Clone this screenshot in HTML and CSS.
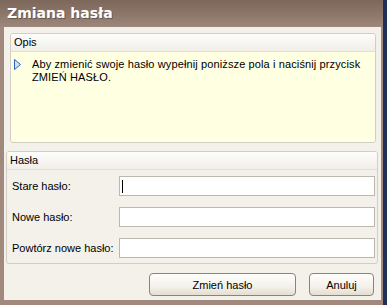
FILE: index.html
```html
<!DOCTYPE html>
<html lang="pl">
<head>
<meta charset="utf-8">
<title>Zmiana hasła</title>
<link rel="stylesheet" href="styles.css">
</head>
<body>
<div class="window">
  <div class="titlebar">Zmiana hasła</div>
  <div class="client">
    <div class="box opis">
      <div class="box-head">Opis</div>
      <div class="opis-body">
        <svg class="arrow" width="7" height="11" viewBox="0 0 7 11"><path d="M0.5 0.5 L6.5 5.5 L0.5 10.5 Z" fill="#cfe0f7" stroke="#2f63c2" stroke-width="1"/></svg>
        <p class="opis-text">Aby zmienić swoje hasło wypełnij poniższe pola i naciśnij przycisk ZMIEŃ HASŁO.</p>
      </div>
    </div>
    <div class="box hasla">
      <div class="box-head">Hasła</div>
      <div class="form">
        <div class="row"><span class="label">Stare hasło:</span><div class="field"><span class="caret"></span></div></div>
        <div class="row"><span class="label">Nowe hasło:</span><div class="field"></div></div>
        <div class="row"><span class="label">Powtórz nowe hasło:</span><div class="field"></div></div>
      </div>
    </div>
    <div class="buttons">
      <button class="btn btn-main">Zmień hasło</button>
      <button class="btn btn-cancel">Anuluj</button>
    </div>
  </div>
</div>
</body>
</html>
```
FILE: styles.css
```css
html, body {
  margin: 0;
  padding: 0;
  background: #1f2f55;
}
.window {
  width: 383px;
  height: 305px;
  display: flex;
  flex-direction: column;
  background: #a18a7d;
  font-family: "Liberation Sans", Arial, sans-serif;
  font-size: 11px;
  color: #000;
}
.titlebar {
  height: 27px;
  box-sizing: border-box;
  padding: 4px 0 0 7px;
  background: linear-gradient(#7d675b, #8f796d 60%, #9e887b);
  color: #fff;
  font-family: "DejaVu Sans", sans-serif;
  font-weight: bold;
  font-size: 14px;
  line-height: 18px;
  text-shadow: 1px 1px 0 #6a564b;
}
.client {
  flex: 1;
  margin: 0 2px 5px 4px;
  background: #f3f1ea;
  display: flex;
  flex-direction: column;
}
.box {
  border: 1px solid #d3cec4;
  border-radius: 3px;
  overflow: hidden;
}
.box-head {
  height: 17px;
  line-height: 17px;
  border-bottom: 1px solid #e3dfd6;
  background: linear-gradient(#fdfdfb, #f1eee7);
  padding-left: 3px;
}
.opis {
  margin: 6px 5px 0 6px;
  height: 108px;
  display: flex;
  flex-direction: column;
}
.opis-body {
  flex: 1;
  background: #ffffe1;
  display: flex;
  align-items: flex-start;
  padding: 6px 0 0 3px;
}
.arrow {
  display: block;
  margin-top: 1px;
  flex: none;
}
.opis-text {
  margin: 0 0 0 11px;
  line-height: 13px;
  letter-spacing: 0.12px;
  width: 335px;
}
.hasla {
  margin: 8px 3px 0 2px;
  height: 111px;
}
.form {
  padding: 6px 0 0 5px;
  display: flex;
  flex-direction: column;
  gap: 11px;
}
.row {
  display: flex;
  align-items: center;
}
.label {
  width: 107px;
}
.field {
  width: 252px;
  height: 18px;
  border: 1px solid #bdb8ae;
  background: #fff;
  display: flex;
  align-items: center;
  padding-left: 2px;
  box-sizing: content-box;
}
.caret {
  width: 1px;
  height: 13px;
  background: #000;
}
.buttons {
  display: flex;
  justify-content: flex-end;
  gap: 13px;
  padding: 9px 7px 0 0;
}
.btn {
  height: 23px;
  border: 1px solid #8a8378;
  border-radius: 4px;
  background: linear-gradient(#fefefc, #f4f1ea 60%, #e4ded1);
  font-family: "Liberation Sans", Arial, sans-serif;
  font-size: 11px;
  color: #000;
  padding: 0;
}
.btn-main {
  width: 147px;
}
.btn-cancel {
  width: 65px;
}
```
